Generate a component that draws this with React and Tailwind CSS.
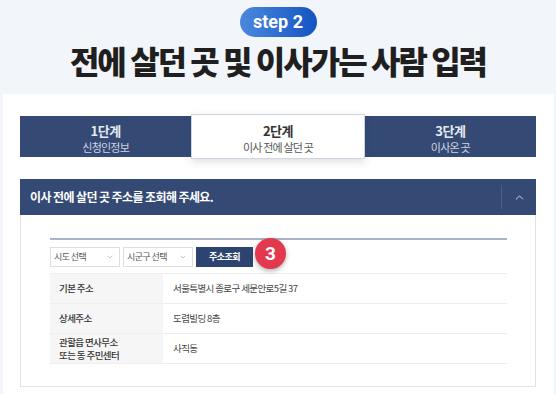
import { ChevronUp, ChevronDown } from 'lucide-react';

const tabs = [
  { step: '1단계', label: '신청인정보' },
  { step: '2단계', label: '이사 전에 살던 곳', active: true },
  { step: '3단계', label: '이사온 곳' },
];

const rows = [
  { label: ['기본 주소'], value: '서울특별시 종로구 세문안로5길 37' },
  { label: ['상세주소'], value: '도렴빌딩 8층' },
  { label: ['관할읍 면사무소', '또는 동 주민센터'], value: '사직동' },
];

function Select({ text, width }) {
  return (
    <div className={`${width} h-full border border-[#dedede] bg-white flex items-center justify-between pl-[3px] pr-[5px] text-[9px] tracking-[-0.6px] text-[#555]`}>
      <span>{text}</span>
      <ChevronDown size={8} strokeWidth={1.5} className="text-[#888]" />
    </div>
  );
}

export default function App() {
  return (
    <div className="h-[394px] overflow-hidden bg-[#f2f5fa] font-['Noto_Sans_CJK_KR','Noto_Sans',sans-serif]">
      <div className="flex flex-col items-center pt-[7px]">
        <div className="w-[77px] h-[30px] rounded-full bg-gradient-to-r from-[#4b88de] to-[#1254c1] flex items-center justify-center text-white text-[18px] font-bold font-['Roboto',sans-serif] leading-none">
          step 2
        </div>
        <h1 className="mt-[3px] text-[32px] leading-[40px] font-black tracking-[-2px] text-[#1f1f1f]">
          전에 살던 곳 및 이사가는 사람 입력
        </h1>
      </div>

      <div className="mt-[14px] ml-[3px] mr-[2px] bg-white pt-[22px] pl-[17px] pr-[18px] pb-[20px]">
        {/* step tabs */}
        <div className="flex h-[41px] bg-[#344a74]">
          {tabs.map((t) =>
            t.active ? (
              <div
                key={t.step}
                className="flex-1 -my-[2px] bg-white border border-[#cfd5df] shadow-[0_3px_8px_rgba(30,45,80,0.15)] flex flex-col items-center justify-center pt-[4px]"
              >
                <span className="text-[13px] leading-[18px] font-bold tracking-[-0.5px] text-[#333]">{t.step}</span>
                <span className="text-[11px] leading-[15px] tracking-[-0.8px] text-[#555]">{t.label}</span>
              </div>
            ) : (
              <div key={t.step} className="flex-1 flex flex-col items-center justify-center pt-[4px]">
                <span className="text-[13px] leading-[18px] font-bold tracking-[-0.5px] text-[#e4e9f1]">{t.step}</span>
                <span className="text-[11px] leading-[15px] tracking-[-0.8px] text-[#cdd5e2]">{t.label}</span>
              </div>
            )
          )}
        </div>

        {/* accordion header */}
        <div className="mt-[22px] h-[36px] bg-[#344a74] flex items-center pl-[10px]">
          <span className="flex-1 text-white text-[12px] font-bold tracking-[-0.6px]">
            이사 전에 살던 곳 주소를 조회해 주세요.
          </span>
          <div className="w-px h-[24px] bg-[#4b6088]" />
          <div className="w-[34px] flex items-center justify-center">
            <ChevronUp size={13} strokeWidth={1.6} className="text-[#dfe5ee]" />
          </div>
        </div>

        {/* accordion body */}
        <div className="border border-t-0 border-[#dfe2e7] pt-[23px] pl-[29px] pr-[28px] pb-[22px]">
          <div className="border-t-2 border-[#a7b4c9]" />

          <div className="mt-[7px] h-[20px] flex items-center">
            <Select text="시도 선택" width="w-[70px]" />
            <div className="ml-[3px] h-full">
              <Select text="시군구 선택" width="w-[70px]" />
            </div>
            <button className="ml-[3px] w-[57px] h-full bg-[#2d4471] text-white text-[9px] font-bold tracking-[-0.5px]">
              주소조회
            </button>
            <div className="ml-[2px] -translate-y-[4px] w-[31px] h-[31px] rounded-full bg-[#e3394f] shadow-[0_2px_5px_rgba(0,0,0,0.3)] flex items-center justify-center text-white text-[19px] font-bold font-['Roboto',sans-serif] leading-none">
              3
            </div>
          </div>

          <div className="mt-[6px] border-t border-[#eeeeee]">
            {rows.map((r) => (
              <div key={r.value} className="flex h-[30px] border-b border-[#eeeeee]">
                <div className="w-[113px] bg-[#f6f6f6] pl-[9px] flex flex-col justify-center text-[9.5px] leading-[13px] font-medium tracking-[-0.6px] text-[#333]">
                  {r.label.map((l) => (
                    <span key={l}>{l}</span>
                  ))}
                </div>
                <div className="flex-1 pl-[10px] flex items-center text-[9.5px] tracking-[-0.6px] text-[#444]">
                  {r.value}
                </div>
              </div>
            ))}
          </div>
        </div>
      </div>
    </div>
  );
}
